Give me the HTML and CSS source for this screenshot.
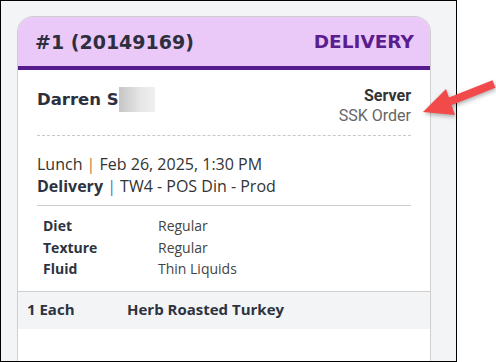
FILE: index.html
```html
<!DOCTYPE html>
<html lang="en">
<head>
    <meta charset="UTF-8">
    <meta name="viewport" content="width=device-width, initial-scale=1.0">
    <title>Order Ticket</title>
    <link rel="stylesheet" href="styles.css">
</head>
<body>
    <div class="frame">
        <div class="ticket">
            <div class="ticket-header">
                <span class="ticket-number">#1 (20149169)</span>
                <span class="ticket-type">DELIVERY</span>
            </div>

            <div class="ticket-body">
                <div class="patient-row">
                    <div class="patient-name">Darren S<span class="blur-box"></span></div>
                    <div class="server">
                        <div class="server-label">Server</div>
                        <div class="server-value">SSK Order</div>
                    </div>
                </div>

                <div class="meal-info">
                    <div>Lunch <span class="pipe pipe-meal">|</span> Feb 26, 2025, 1:30 PM</div>
                    <div><strong>Delivery</strong> <span class="pipe pipe-loc">|</span> TW4 - POS Din - Prod</div>
                </div>

                <div class="diet-table">
                    <div class="diet-label">Diet</div>
                    <div class="diet-value">Regular</div>
                    <div class="diet-label">Texture</div>
                    <div class="diet-value">Regular</div>
                    <div class="diet-label">Fluid</div>
                    <div class="diet-value">Thin Liquids</div>
                </div>
            </div>

            <div class="item-row">
                <span class="item-qty">1 Each</span>
                <span class="item-name">Herb Roasted Turkey</span>
            </div>
            <div class="ticket-rest"></div>
        </div>
    </div>

    <svg class="callout-arrow" width="496" height="362" viewBox="0 0 496 362">
        <line x1="494" y1="84" x2="446" y2="103" stroke="#f24a4a" stroke-width="8"/>
        <polygon points="423,112 446,89 455,115" fill="#f24a4a"/>
    </svg>
</body>
</html>
```

FILE: styles.css
```css
* {
    margin: 0;
    padding: 0;
    box-sizing: border-box;
}
body {
    width: 496px;
    height: 362px;
    background-color: white;
    position: relative;
    overflow: hidden;
}
.frame {
    width: 457px;
    height: 362px;
    border: 1px solid #000;
    background-color: #f3f4f6;
    overflow: hidden;
    padding: 15px 0 0 16px;
}
.ticket {
    width: 414px;
    background-color: white;
    border: 1px solid #cfcfcf;
    border-bottom: none;
    border-radius: 16px 16px 0 0;
    overflow: hidden;
}
.ticket-header {
    height: 53px;
    background-color: #eac9f8;
    border-bottom: 4px solid #561b8d;
    display: flex;
    justify-content: space-between;
    align-items: center;
    padding: 0 16px 0 17px;
    font-family: "DejaVu Sans", sans-serif;
    font-weight: 700;
}
.ticket-number {
    font-size: 19px;
    color: #2e2f3e;
}
.ticket-type {
    font-size: 18.5px;
    color: #5a1d8e;
}
.ticket-body {
    padding: 0 19px;
}
.patient-row {
    display: flex;
    justify-content: space-between;
    padding: 16px 0 9px;
    border-bottom: 1px dashed #c8c8c8;
}
.patient-name {
    display: flex;
    align-items: center;
    height: 26px;
    font-family: "DejaVu Sans", sans-serif;
    font-weight: 700;
    font-size: 16.5px;
    color: #2e2f3e;
}
.blur-box {
    display: inline-block;
    width: 36px;
    height: 25px;
    background: linear-gradient(90deg, #c6c6c6, #e6e6e6 60%, #f0f0f0);
}
.server {
    text-align: right;
    font-family: Roboto, sans-serif;
    font-size: 16px;
    line-height: 20px;
}
.server-label {
    font-weight: 700;
    color: #333;
}
.server-value {
    color: #666;
}
.meal-info {
    padding: 17px 0 8px;
    border-bottom: 1px solid #cfcfcf;
    font-family: "Open Sans", sans-serif;
    font-size: 16px;
    line-height: 22px;
    color: #333;
}
.meal-info strong {
    font-weight: 700;
    color: #2d3340;
}
.pipe-meal {
    color: #b97a3e;
}
.pipe-loc {
    color: #4a78b8;
}
.diet-table {
    display: grid;
    grid-template-columns: 115px 1fr;
    padding: 9px 0 11px 6px;
    font-family: "Open Sans", sans-serif;
    font-size: 14px;
    line-height: 21.5px;
}
.diet-label {
    font-weight: 700;
    color: #2d3340;
}
.diet-value {
    color: #444;
}
.item-row {
    display: flex;
    height: 38px;
    border-top: 1px solid #cfcfcf;
    background-color: #f3f4f6;
    padding: 0 9px 2px;
    font-family: "Open Sans", sans-serif;
    font-weight: 700;
    font-size: 15px;
    line-height: 35px;
    color: #2d3340;
}
.item-qty {
    width: 100px;
}
.ticket-rest {
    height: 60px;
}
.callout-arrow {
    position: absolute;
    left: 0;
    top: 0;
    pointer-events: none;
    filter: drop-shadow(1px 2px 2px rgba(0, 0, 0, 0.3));
}
```
